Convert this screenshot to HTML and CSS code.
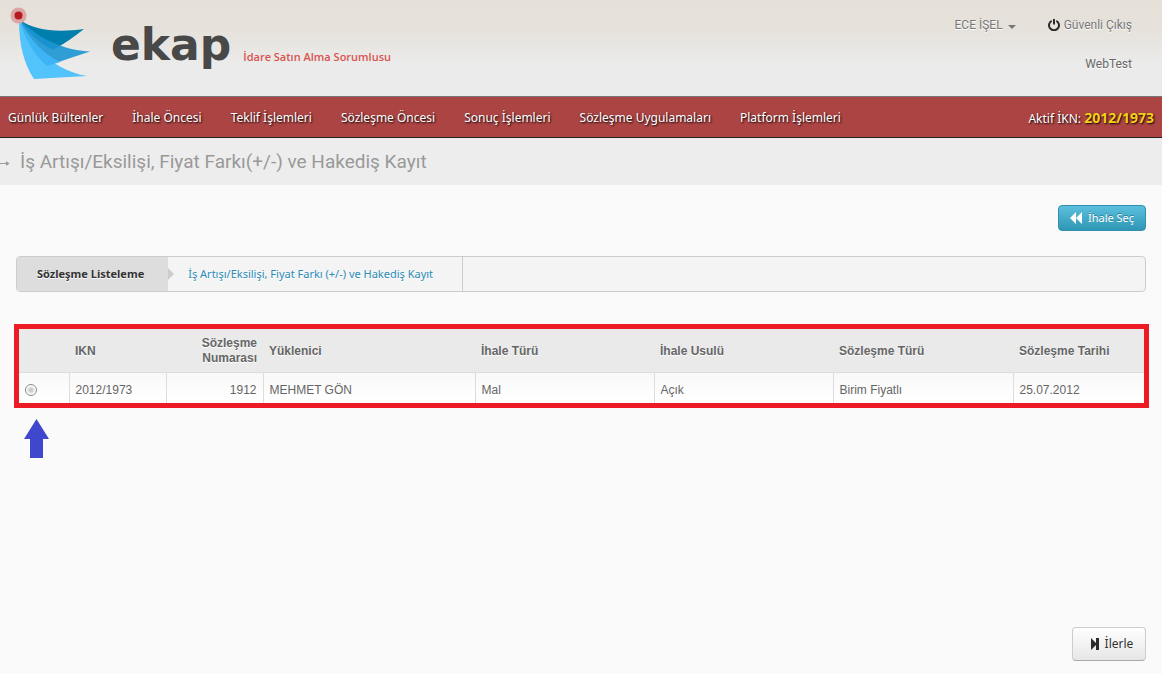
FILE: index.html
```html
<!DOCTYPE html>
<html lang="tr">
<head>
<meta charset="utf-8">
<title>EKAP</title>
<link rel="stylesheet" href="styles.css">
</head>
<body>
<header class="header">
  <a class="brand" href="#">
    <svg class="brand-mark" width="84" height="76" viewBox="8 6 84 76" aria-hidden="true">
      <path d="M20 20C34 30 56 33 84 29C74 37 64 44 53 50C38 43 28 32 20 20Z" fill="#007fae"/>
      <path d="M20 20C34 34 58 50 90 51.500C76 56 62 61 47 66C33 54 25 38 20 20Z" fill="#1c96d3" fill-opacity=".9"/>
      <path d="M19 20C26 38 47 69 87 76L34 79C24 64 19 45 19 20Z" fill="#52c3fb"/>
      <path d="M20 21C30 40 44 54 60 62L47 66C33 54 25 38 20 21Z" fill="#3cb4f6"/>
      <circle cx="18.500" cy="15.500" r="8" fill="#dca6a5"/>
      <circle cx="18.500" cy="15.500" r="4" fill="#b61b22"/>
    </svg>
    <span class="brand-name">ekap</span>
  </a>
  <span class="role">İdare Satın Alma Sorumlusu</span>
  <div class="account">
    <div class="account-links">
      <button class="user" type="button">ECE İŞEL <span class="caret"></span></button>
      <a class="logout" href="#"><svg width="12" height="12" viewBox="0 0 12 12" aria-hidden="true"><path d="M3.700 1.800A5 5 0 1 0 8.300 1.800" fill="none" stroke="#2b2b2b" stroke-width="2"/><path d="M6 0V5.500" stroke="#2b2b2b" stroke-width="2"/></svg>Güvenli Çıkış</a>
    </div>
    <span class="site">WebTest</span>
  </div>
</header>
<nav class="nav">
  <a href="#">Günlük Bültenler</a>
  <a href="#">İhale Öncesi</a>
  <a href="#">Teklif İşlemleri</a>
  <a href="#">Sözleşme Öncesi</a>
  <a href="#">Sonuç İşlemleri</a>
  <a href="#">Sözleşme Uygulamaları</a>
  <a href="#">Platform İşlemleri</a>
  <span class="active-ikn">Aktif İKN: <strong>2012/1973</strong></span>
</nav>
<div class="title-bar">
  <svg width="10" height="7" viewBox="0 0 10 7" aria-hidden="true"><path d="M0 3.500H8" stroke="#999"/><path d="M6 1L9.500 3.500L6 6Z" fill="#999"/></svg>
  <h1>İş Artışı/Eksilişi, Fiyat Farkı(+/-) ve Hakediş Kayıt</h1>
</div>
<main class="main">
  <button class="btn btn-info" type="button"><svg width="12" height="12" viewBox="0 0 12 12" aria-hidden="true"><path d="M6 0V12L0 6ZM12 0V12L6 6Z" fill="#fff"/></svg>İhale Seç</button>
  <ol class="steps">
    <li class="step current">Sözleşme Listeleme</li>
    <li class="step"><a href="#">İş Artışı/Eksilişi, Fiyat Farkı (+/-) ve Hakediş Kayıt</a></li>
  </ol>
  <div class="highlight">
    <table class="grid">
      <colgroup><col class="c-pick"><col class="c-short"><col class="c-short"><col class="c-firm"><col class="c-mid"><col class="c-mid"><col class="c-type"><col></colgroup>
      <thead>
        <tr><th></th><th>IKN</th><th class="num">Sözleşme Numarası</th><th>Yüklenici</th><th>İhale Türü</th><th>İhale Usulü</th><th>Sözleşme Türü</th><th>Sözleşme Tarihi</th></tr>
      </thead>
      <tbody>
        <tr><td><input class="pick" type="radio" name="contract" aria-label="2012/1973"></td><td>2012/1973</td><td class="num">1912</td><td>MEHMET GÖN</td><td>Mal</td><td>Açık</td><td>Birim Fiyatlı</td><td>25.07.2012</td></tr>
      </tbody>
    </table>
  </div>
  <svg class="pointer" width="25" height="39" viewBox="0 0 25 39" aria-hidden="true"><path d="M12.500 0L25 20H19V39H6V20H0Z" fill="#3f48cc"/></svg>
  <button class="btn btn-next" type="button"><svg width="8" height="12" viewBox="0 0 8 12" aria-hidden="true"><path d="M0 0L5 5V0H8V12H5V7L0 12Z" fill="#2b2b2b"/></svg>İlerle</button>
</main>
</body>
</html>
```
FILE: styles.css
```css
* { box-sizing: border-box; }
body {
  margin: 0;
  min-height: 100vh;
  display: flex;
  flex-direction: column;
  background: #fafafa;
  color: #666;
  font: 12px/18px "Noto Sans", "Open Sans", sans-serif;
}
a { color: inherit; text-decoration: none; }
button { font: inherit; cursor: pointer; }
svg { flex: none; }

.header {
  display: flex;
  align-items: flex-start;
  height: 97px;
  padding: 6px 30px 0 8px;
  border-bottom: 1px solid #777;
  background: linear-gradient(#e5e0d8, #e6e2db 30px, #ebebeb 64px);
}
.brand { display: flex; gap: 19px; }
.brand-name {
  margin-top: 14px;
  color: #484848;
  font: bold 44px/50px "DejaVu Sans", sans-serif;
}
.role { margin: 42px 0 0 12px; color: #d9534f; font-family: "Open Sans", sans-serif; font-size: 11px; font-weight: 600; }
.account { margin-left: auto; display: flex; flex-direction: column; gap: 21px; padding-top: 10px; color: #777; font: 12px/18px Roboto, sans-serif; text-shadow: 0 1px 0 #fff; }
.account-links { display: flex; gap: 32px; }
.user { display: flex; align-items: center; gap: 5px; padding: 0; border: 0; background: none; color: inherit; text-shadow: inherit; }
.caret { margin-top: 4px; border: 4px solid transparent; border-bottom: 0; border-top-color: #777; }
.logout { display: flex; align-items: center; gap: 4px; }
.site { align-self: flex-end; color: #666; }

.nav {
  display: flex;
  align-items: center;
  gap: 29px;
  height: 41px;
  padding: 2px 8px 0;
  border-bottom: 1px solid #222;
  background: #ad4444;
  color: #fff;
  text-shadow: 1px 1px 2px #000;
  white-space: nowrap;
}
.active-ikn { margin-left: auto; }
.active-ikn strong { color: #f5d017; font-family: "Open Sans", sans-serif; font-size: 14px; }

.title-bar { display: flex; align-items: center; gap: 10px; height: 47px; background: #ededed; }
.title-bar svg { margin-top: 4px; }
.title-bar h1 { margin: 0; color: #999; font: 19px/30px Roboto, sans-serif; }

.main { flex: 1; display: flex; flex-direction: column; padding: 20px 16px 13px; }
.btn { align-self: flex-end; display: flex; align-items: center; justify-content: center; border-radius: 4px; }
.btn-info {
  gap: 6px;
  width: 88px;
  height: 26px;
  padding: 0;
  border: 1px solid #2f8fae;
  background: linear-gradient(#5bc0de, #2f96b4);
  color: #fff;
  font-size: 11px;
  text-shadow: 0 -1px 0 #2a7f99;
}
.steps {
  display: flex;
  height: 36px;
  margin: 25px 0 32px;
  padding: 0;
  border: 1px solid #ccc;
  border-radius: 4px;
  background: #f4f4f4;
  list-style: none;
  font-size: 11px;
  line-height: 34px;
  text-shadow: 0 1px 0 #fff;
}
.step { padding: 0 29px 0 20px; border-right: 1px solid #ccc; color: #2a8bb5; }
.step.current { position: relative; padding-right: 24px; border-right: 0; border-radius: 3px 0 0 3px; background: #ddd; color: #333; font-weight: bold; }
.step.current::after {
  content: "";
  position: absolute;
  left: 100%;
  top: 11px;
  border: 6px solid transparent;
  border-right: 0;
  border-left-color: #ccc;
}

.highlight { margin: 0 -3px 0 -2px; border: 5px solid #ed1c24; }
.grid { width: 100%; table-layout: fixed; border-collapse: collapse; font: 12px/15px "Liberation Sans", Arial, sans-serif; }
.c-pick { width: 50px; }
.c-short { width: 97px; }
.c-firm { width: 212px; }
.c-mid { width: 179px; }
.c-type { width: 180px; }
.grid th { height: 43px; padding: 2px 6px 0; border-bottom: 1px solid #ddd; background: #eaeaea; text-align: left; text-shadow: 0 1px 0 #fff; }
.grid td { height: 31px; padding: 5px 6px 0; border-left: 1px solid #ddd; background: linear-gradient(#f8f8f8, #fff); }
.grid td:first-child { border-left: 0; padding-top: 4px; }
.grid .num { text-align: right; }
.pick {
  appearance: none;
  display: block;
  width: 12px;
  height: 12px;
  margin: 0;
  border: 1px solid #8a8a8a;
  border-radius: 50%;
  background: radial-gradient(#ccc 20%, #eee 50%, #fff 60%);
}
.pointer { display: block; margin: 11px 0 20px 8px; }
.btn-next {
  gap: 6px;
  width: 74px;
  height: 34px;
  margin-top: auto;
  padding: 0 0 0 6px;
  border: 1px solid #ccc;
  border-bottom-color: #aaa;
  background: linear-gradient(#fff, #e6e6e6);
  color: #333;
}
```
